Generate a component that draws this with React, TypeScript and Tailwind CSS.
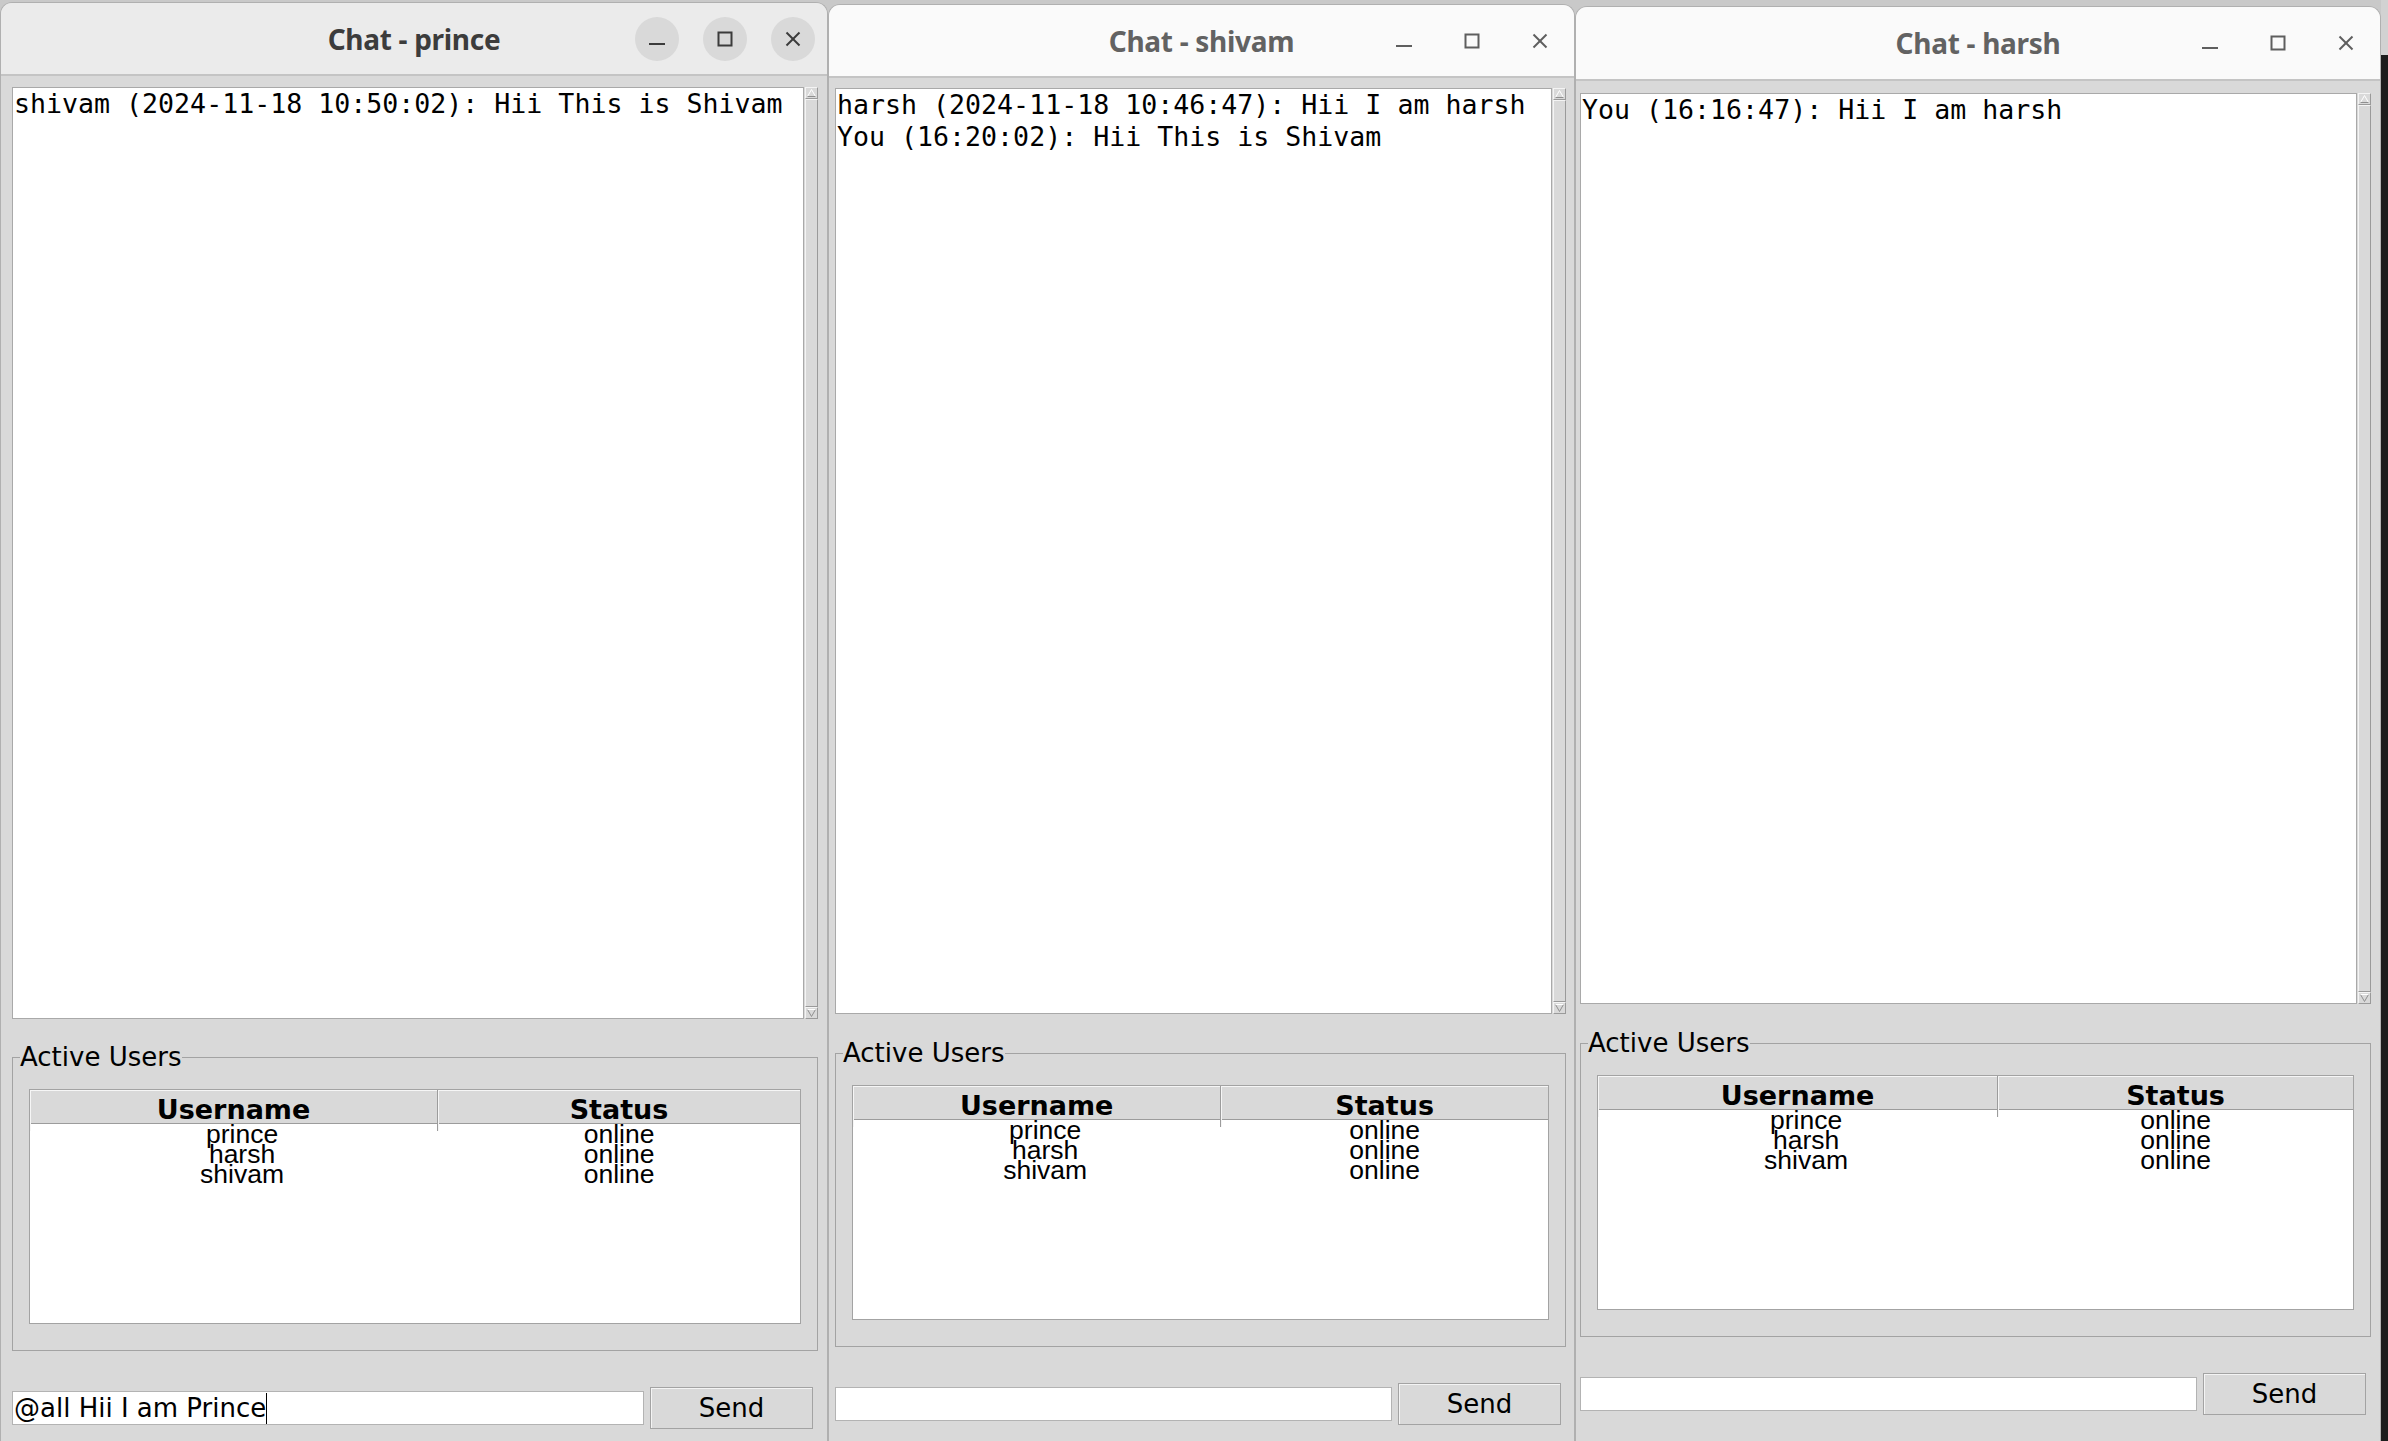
import React from "react";

type ChatWin = {
  title: string;
  active?: boolean;
  lines: string[];
  draft: string;
  frame: string;
  bar: string;
  body: string;
  log: string;
  group: string;
};

const users = [
  { name: "prince", status: "online" },
  { name: "harsh", status: "online" },
  { name: "shivam", status: "online" },
];

const windows: ChatWin[] = [
  {
    title: "Chat - prince",
    active: true,
    lines: ["shivam (2024-11-18 10:50:02): Hii This is Shivam"],
    draft: "@all Hii I am Prince",
    frame: "w-[828px] mt-[2px]",
    bar: "h-[73px] bg-[#ebebeb]",
    body: "pt-[11px] pl-[11px] pr-[9px]",
    log: "h-[932px]",
    group: "mt-[23px]",
  },
  {
    title: "Chat - shivam",
    lines: ["harsh (2024-11-18 10:46:47): Hii I am harsh", "You (16:20:02): Hii This is Shivam"],
    draft: "",
    frame: "w-[747px] mt-[4px]",
    bar: "h-[73px] bg-[#fafafa]",
    body: "pt-[10px] pl-[6px] pr-[8px]",
    log: "h-[926px]",
    group: "mt-[24px]",
  },
  {
    title: "Chat - harsh",
    lines: ["You (16:16:47): Hii I am harsh"],
    draft: "",
    frame: "w-[806px] mt-[6px]",
    bar: "h-[74px] bg-[#fafafa]",
    body: "pt-[12px] pl-[4px] pr-[9px]",
    log: "h-[911px]",
    group: "mt-[24px]",
  },
];

const sans = "font-['DejaVu_Sans','Liberation_Sans',sans-serif]";

function WinButton({ kind, active }: { kind: "min" | "max" | "close"; active?: boolean }) {
  const color = active ? "#3b3b3b" : "#5e5e5e";
  return (
    <span
      className={`flex h-[44px] w-[44px] items-center justify-center rounded-full ${active ? "bg-[#d9d9d9]" : ""}`}
    >
      <svg width="16" height="16" viewBox="0 0 16 16" fill="none" stroke={color} strokeWidth="2">
        {kind === "min" && <line x1="0" y1="13" x2="16" y2="13" />}
        {kind === "max" && <rect x="1.5" y="1.5" width="13" height="13" />}
        {kind === "close" && (
          <>
            <line x1="1.5" y1="1.5" x2="14.5" y2="14.5" />
            <line x1="14.5" y1="1.5" x2="1.5" y2="14.5" />
          </>
        )}
      </svg>
    </span>
  );
}

function Arrow({ up }: { up?: boolean }) {
  return (
    <div className="flex h-[12px] items-center justify-center border border-[#f4f4f4] border-r-[#9a9a9a] border-b-[#9a9a9a]">
      <svg width="9" height="8" viewBox="0 0 9 8">
        {up ? (
          <>
            <polyline points="0.5,7.5 4.5,0.5 8.5,7.5" fill="none" stroke="#ffffff" />
            <line x1="0.5" y1="7.5" x2="8.5" y2="7.5" stroke="#8f8f8f" />
          </>
        ) : (
          <>
            <polyline points="0.5,0.5 4.5,7.5 8.5,0.5" fill="none" stroke="#8f8f8f" />
            <line x1="0.5" y1="0.5" x2="8.5" y2="0.5" stroke="#ffffff" />
          </>
        )}
      </svg>
    </div>
  );
}

function Scrollbar() {
  return (
    <div className="ml-px flex w-[13px] shrink-0 flex-col bg-[#d9d9d9]">
      <Arrow up />
      <div className="flex-1 border border-[#f4f4f4] border-r-[#9a9a9a] border-b-[#9a9a9a]" />
      <Arrow />
    </div>
  );
}

function UserTable() {
  return (
    <div className="mx-[16px] flex h-[235px] flex-col border border-[#a3a3a3] bg-white">
      <div className={`grid h-[34px] shrink-0 grid-cols-[53%_47%] border-b border-[#9c9c9c] bg-[#d9d9d9] ${sans} text-[27px] font-bold text-black`}>
        <div className="flex items-center justify-center border-r border-[#9c9c9c] shadow-[inset_1px_1px_0_#f6f6f6]">Username</div>
        <div className="flex items-center justify-center shadow-[inset_1px_1px_0_#f6f6f6]">Status</div>
      </div>
      <div className="font-['Liberation_Sans',Arial,sans-serif] text-[26.5px] text-black">
        {users.map((u) => (
          <div key={u.name} className="grid h-[20px] grid-cols-[53%_47%] leading-[20px]">
            <div className="pl-[16px] text-center">{u.name}</div>
            <div className="text-center">{u.status}</div>
          </div>
        ))}
      </div>
    </div>
  );
}

function ChatWindow({ w }: { w: ChatWin }) {
  return (
    <div className={`flex shrink-0 flex-col overflow-hidden rounded-t-[12px] border border-b-0 border-[#b0b0b0] bg-[#d9d9d9] ${w.frame}`}>
      <div className={`grid shrink-0 grid-cols-[1fr_auto_1fr] items-center border-b-2 border-[#c4c4c4] ${w.bar}`}>
        <div />
        <div
          className={`font-['Noto_Sans','Open_Sans',sans-serif] text-[28px] font-bold tracking-[-0.3px] ${w.active ? "text-[#3c3c3c]" : "text-[#626262]"}`}
        >
          {w.title}
        </div>
        <div className="flex justify-end gap-[24px] pr-[12px]">
          <WinButton kind="min" active={w.active} />
          <WinButton kind="max" active={w.active} />
          <WinButton kind="close" active={w.active} />
        </div>
      </div>

      <div className={`flex flex-col ${w.body}`}>
        <div className={`flex ${w.log}`}>
          <div className="flex-1 border border-[#a9a9a9] bg-white px-px font-['DejaVu_Sans_Mono','Liberation_Mono',monospace] text-[26.6px] leading-[32px] text-black">
            {w.lines.map((line) => (
              <div key={line} className="whitespace-pre">
                {line}
              </div>
            ))}
          </div>
          <Scrollbar />
        </div>

        <fieldset className={`border border-[#a3a3a3] pb-[26px] ${w.group}`}>
          <legend className={`ml-[7px] ${sans} text-[26px] leading-[30px] text-black`}>Active Users</legend>
          <div className="pt-[17px]">
            <UserTable />
          </div>
        </fieldset>

        <div className="mt-[36px] flex items-center gap-[6px] pr-[5px]">
          <div className={`flex h-[34px] flex-1 items-center overflow-hidden whitespace-nowrap border border-[#b3b3b3] bg-white pl-px ${sans} text-[26px] text-black`}>
            {w.draft}
            {w.active && <span className="inline-block h-[31px] w-px bg-black" />}
          </div>
          <button className={`flex h-[42px] w-[163px] items-center justify-center border border-[#a3a3a3] bg-[#d9d9d9] shadow-[inset_1px_1px_0_#f4f4f4] ${sans} text-[26px] text-black`}>
            Send
          </button>
        </div>
      </div>
    </div>
  );
}

export default function App() {
  return (
    <div className="flex h-[1441px] w-[2388px] overflow-hidden bg-[#c9c9c9]">
      {windows.map((w) => (
        <ChatWindow key={w.title} w={w} />
      ))}
      <div className="flex w-[7px] shrink-0 flex-col">
        <div className="h-[55px] bg-[#d2d2d2]" />
        <div className="flex-1 bg-[#1c1c1c]" />
      </div>
    </div>
  );
}
